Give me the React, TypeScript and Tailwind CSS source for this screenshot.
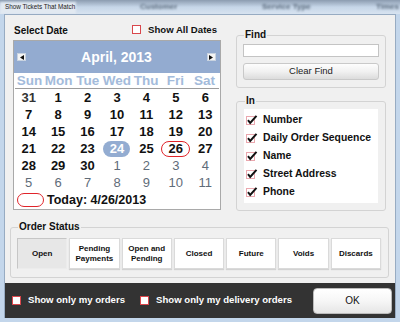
import React from "react";

const font = "font-['Liberation_Sans',Arial,sans-serif]";

type Day = { n: number; kind: "prev" | "cur" | "next" };

function buildDays(): Day[] {
  const days: Day[] = [{ n: 31, kind: "prev" }];
  for (let i = 1; i <= 30; i++) days.push({ n: i, kind: "cur" });
  for (let i = 1; i <= 11; i++) days.push({ n: i, kind: "next" });
  return days;
}

function Arrow({ dir }: { dir: "left" | "right" }) {
  return (
    <div className="w-[9px] h-[8px] bg-[#f4f4f4] border border-[#c9d3e0] flex items-center justify-center">
      <svg width="4" height="5" viewBox="0 0 4 5">
        {dir === "left" ? <path d="M4 0 L0 2.5 L4 5 Z" fill="#111" /> : <path d="M0 0 L4 2.5 L0 5 Z" fill="#111" />}
      </svg>
    </div>
  );
}

function RedBox() {
  return <div className="w-[9px] h-[9px] bg-white border border-[#d9474c] shrink-0" />;
}

function CheckedPink() {
  return (
    <svg width="12" height="11" viewBox="0 0 12 11" className="shrink-0">
      <rect x="0.5" y="2.5" width="8" height="8" fill="#fff" stroke="#eaa7ae" />
      <path d="M2 6.2 L4.2 9 L10.5 1.8" fill="none" stroke="#111" strokeWidth="2" />
    </svg>
  );
}

function Calendar() {
  const days = buildDays();
  const names = ["Sun", "Mon", "Tue", "Wed", "Thu", "Fri", "Sat"];
  return (
    <div className="w-[208px] border border-[#a9a9a9] bg-white">
      <div className="h-[32px] bg-[#93abd0] flex items-center justify-between pl-[3px] pr-[4px]">
        <Arrow dir="left" />
        <span className="text-white font-bold text-[14px]">April, 2013</span>
        <Arrow dir="right" />
      </div>
      <div className="grid grid-cols-7 h-[16px] mx-[1px] border-b border-[#9c9c9c] items-center">
        {names.map((d) => (
          <span key={d} className="text-center text-[13.5px] font-bold text-[#a3bbdb] leading-none">
            {d}
          </span>
        ))}
      </div>
      <div className="grid grid-cols-7">
        {days.map((d, i) => {
          const sel = d.kind === "cur" && d.n === 24;
          const today = d.kind === "cur" && d.n === 26;
          const color =
            d.kind === "cur" ? "text-[#111] font-bold" : d.kind === "prev" ? "text-[#333] font-bold" : "text-[#5f6c79]";
          return (
            <div key={i} className="h-[17px] flex items-center justify-center">
              <span
                className={`flex items-center justify-center text-[13px] leading-none ${color} ${
                  sel ? "w-[27px] h-[16px] rounded-full bg-[#93acd1] !text-white" : ""
                } ${today ? "w-[29px] h-[16px] rounded-full border-[1.5px] border-[#e0242a]" : ""}`}
              >
                {d.n}
              </span>
            </div>
          );
        })}
      </div>
      <div className="h-[18px] flex items-center pl-[3px]">
        <div className="w-[27px] h-[14px] rounded-full border-[1.5px] border-[#e0242a]" />
        <span className="ml-[3px] text-[12.5px] font-bold text-[#111] leading-none">Today: 4/26/2013</span>
      </div>
    </div>
  );
}

const statuses: [string, string?][] = [
  ["Open"],
  ["Pending", "Payments"],
  ["Open and", "Pending"],
  ["Closed"],
  ["Future"],
  ["Voids"],
  ["Discards"],
];

export default function App() {
  return (
    <div className={`w-[400px] h-[322px] bg-[#c3d6eb] flex flex-col ${font}`}>
      {/* title bar */}
      <div className="h-[14px] relative overflow-hidden bg-gradient-to-b from-[#8c9cb0] via-[#c6d6e8] to-[#d7e3f0]">
        <div className="absolute inset-0 flex items-center blur-[1.3px] text-[8px] font-bold text-[#5a6a7c]">
          <span className="absolute left-[140px]">Customer</span>
          <span className="absolute left-[262px]">Service Type</span>
          <span className="absolute left-[376px]">Times</span>
        </div>
        <div className="absolute left-0 top-[2px] bottom-0 w-[76px] bg-[#e2e9f1] blur-[1px]" />
        <span className="absolute left-[5px] top-[3px] text-[6.3px] leading-[8px] text-[#222]">Show Tickets That Match</span>
      </div>

      {/* content */}
      <div className="flex-1 mx-[4px] mb-[4px] flex flex-col bg-[#f0f0f0] border-t border-l border-r border-[#97abc2]">
        <div className="flex">
          <div className="ml-[8px] mt-[7px]">
            <div className="h-[16px] flex items-center justify-between pl-[1px] pr-[4px] mb-[2px]">
              <span className="text-[10px] font-bold text-[#111]">Select Date</span>
              <div className="flex items-center gap-[7px]">
                <RedBox />
                <span className="text-[9.6px] font-bold text-[#111]">Show All Dates</span>
              </div>
            </div>
            <Calendar />
          </div>

          <div className="ml-[15px] mt-[14px] w-[150px] flex flex-col">
            <fieldset className="border border-[#d3d3d3] rounded-[3px] px-[6px] pb-[6px]">
              <legend className="ml-[1px] px-[1px] text-[10px] leading-[12px] font-bold text-[#111]">Find</legend>
              <div className="mt-[3px] h-[13px] bg-white border border-[#c4c4c4]" />
              <button className="mt-[6px] w-full h-[17px] rounded-[3px] border border-[#c9c9c9] bg-gradient-to-b from-[#fdfdfd] via-[#f1f1f1] to-[#dcdcdc] text-[9.5px] text-[#222]">
                Clear Find
              </button>
            </fieldset>
            <fieldset className="mt-[7px] border border-[#d3d3d3] rounded-[3px] px-[7px] pb-[7px]">
              <legend className="ml-[1px] px-[1px] text-[10px] leading-[12px] font-bold text-[#111]">In</legend>
              <div className="mt-[2px] h-[94px] bg-white pt-[1px] pl-[2px]">
                {["Number", "Daily Order Sequence", "Name", "Street Address", "Phone"].map((t) => (
                  <div key={t} className="h-[18px] flex items-center gap-[5px]">
                    <CheckedPink />
                    <span className="text-[10.4px] font-bold text-[#111]">{t}</span>
                  </div>
                ))}
              </div>
            </fieldset>
          </div>
        </div>

        <fieldset className="mt-[10px] ml-[5px] mr-[6px] border border-[#d3d3d3] rounded-[3px] pl-[6px] pr-[7px] pb-[8px]">
          <legend className="ml-[1px] px-[1px] text-[10px] leading-[12px] font-bold text-[#111]">Order Status</legend>
          <div className="mt-[5px] flex gap-[2px]">
            {statuses.map(([a, b], i) => (
              <button
                key={a + i}
                className={`flex-1 h-[31px] flex flex-col items-center justify-center text-[8px] leading-[9.5px] font-bold text-[#111] ${
                  i === 0
                    ? "bg-[#e7e7e7] border border-t-[#c6c6c6] border-l-[#c6c6c6] border-r-[#ececec] border-b-[#ececec]"
                    : "bg-white border border-[#dadada] shadow-[0_1px_1px_rgba(0,0,0,0.12)]"
                }`}
              >
                <span>{a}</span>
                {b && <span>{b}</span>}
              </button>
            ))}
          </div>
        </fieldset>

        <div className="mt-auto h-[35px] bg-[#333333] flex items-center pl-[7px] pr-[3px]">
          <RedBox />
          <span className="ml-[7px] text-[9.6px] font-bold text-white">Show only my orders</span>
          <div className="ml-[15px]">
            <RedBox />
          </div>
          <span className="ml-[7px] text-[9.6px] font-bold text-white">Show only my delivery orders</span>
          <button className="ml-auto w-[79px] h-[26px] rounded-[4px] bg-gradient-to-b from-white via-[#f6f6f6] to-[#e6e6e6] border border-[#bbbbbb] text-[10px] text-[#111]">
            OK
          </button>
        </div>
      </div>
    </div>
  );
}
